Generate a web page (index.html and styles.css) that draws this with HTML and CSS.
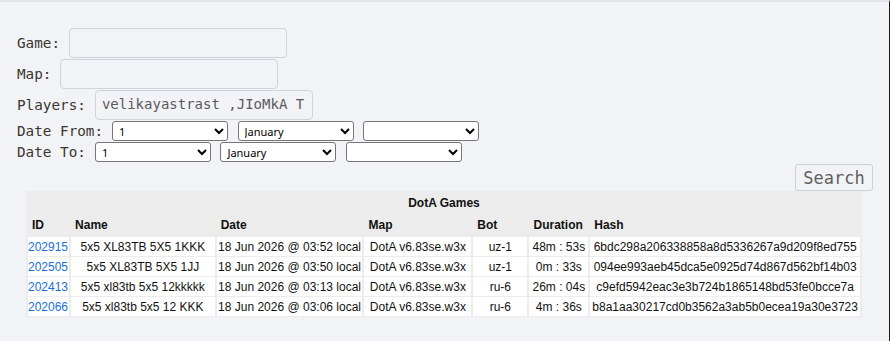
FILE: index.html
```html
<!DOCTYPE html>
<html lang="en">
<head>
    <meta charset="UTF-8">
    <meta name="viewport" content="width=device-width, initial-scale=1.0">
    <title>DotA Games</title>
    <link rel="stylesheet" href="styles.css">
</head>
<body>
    <div class="page">
        <form class="search-form">
            <div class="row">
                <label class="lbl">Game:</label>
                <input class="field" type="text">
            </div>
            <div class="row">
                <label class="lbl">Map:</label>
                <input class="field" type="text">
            </div>
            <div class="row">
                <label class="lbl">Players:</label>
                <input class="field" type="text" value="velikayastrast ,JIoMkA_T">
            </div>
            <div class="row date-row">
                <label class="lbl">Date From:</label>
                <select class="sel"><option>1</option></select>
                <select class="sel"><option>January</option></select>
                <select class="sel"><option></option></select>
            </div>
            <div class="row date-row">
                <label class="lbl">Date To:</label>
                <select class="sel"><option>1</option></select>
                <select class="sel"><option>January</option></select>
                <select class="sel"><option></option></select>
            </div>
            <div class="btn-row">
                <button class="search-btn" type="button">Search</button>
            </div>
        </form>

        <table class="games">
            <thead>
                <tr><th class="title" colspan="7">DotA Games</th></tr>
                <tr>
                    <th class="c-id">ID</th>
                    <th class="c-name">Name</th>
                    <th class="c-date">Date</th>
                    <th class="c-map">Map</th>
                    <th class="c-bot">Bot</th>
                    <th class="c-dur">Duration</th>
                    <th class="c-hash">Hash</th>
                </tr>
            </thead>
            <tbody>
                <tr>
                    <td class="id"><a href="#">202915</a></td>
                    <td>5x5 XL83TB 5X5 1KKK</td>
                    <td>18 Jun 2026 @ 03:52 local</td>
                    <td>DotA v6.83se.w3x</td>
                    <td>uz-1</td>
                    <td>48m : 53s</td>
                    <td>6bdc298a206338858a8d5336267a9d209f8ed755</td>
                </tr>
                <tr>
                    <td class="id"><a href="#">202505</a></td>
                    <td>5x5 XL83TB 5X5 1JJ</td>
                    <td>18 Jun 2026 @ 03:50 local</td>
                    <td>DotA v6.83se.w3x</td>
                    <td>uz-1</td>
                    <td>0m : 33s</td>
                    <td>094ee993aeb45dca5e0925d74d867d562bf14b03</td>
                </tr>
                <tr>
                    <td class="id"><a href="#">202413</a></td>
                    <td>5x5 xl83tb 5x5 12kkkkk</td>
                    <td>18 Jun 2026 @ 03:13 local</td>
                    <td>DotA v6.83se.w3x</td>
                    <td>ru-6</td>
                    <td>26m : 04s</td>
                    <td>c9efd5942eac3e3b724b1865148bd53fe0bcce7a</td>
                </tr>
                <tr>
                    <td class="id"><a href="#">202066</a></td>
                    <td>5x5 xl83tb 5x5 12 KKK</td>
                    <td>18 Jun 2026 @ 03:06 local</td>
                    <td>DotA v6.83se.w3x</td>
                    <td>ru-6</td>
                    <td>4m : 36s</td>
                    <td>b8a1aa30217cd0b3562a3ab5b0ecea19a30e3723</td>
                </tr>
            </tbody>
        </table>
    </div>
</body>
</html>
```

FILE: styles.css
```css
html, body {
    margin: 0;
    padding: 0;
    background: #fff;
}

.page {
    width: 890px;
    height: 341px;
    box-sizing: border-box;
    background-color: #f2f3f7;
    border-top: 2px solid #e3e4e9;
    border-right: 1px solid #1c1c1c;
    padding: 26px 16px 0 17px;
}

.search-form {
    font-family: 'DejaVu Sans Mono', monospace;
    font-size: 14.3px;
    color: #3a3630;
}

.row {
    display: flex;
    align-items: center;
    margin-bottom: 1px;
}

.lbl {
    margin-right: 9px;
    white-space: pre;
}

.field {
    width: 218px;
    height: 30px;
    box-sizing: border-box;
    border: 1px solid #d2d3d8;
    border-radius: 4px;
    background-color: #f2f3f7;
    padding: 0 4px 2px 6px;
    font-family: 'DejaVu Sans Mono', monospace;
    font-size: 14px;
    color: #5a5a5a;
    outline: none;
}

.date-row {
    height: 20px;
    margin-bottom: 1px;
}

.sel {
    width: 116px;
    height: 20px;
    box-sizing: border-box;
    margin-right: 9.5px;
    border: 1px solid #767676;
    border-radius: 3px;
    background-color: #fff;
    font-family: 'Noto Sans', sans-serif;
    font-size: 11px;
    color: #000;
    padding: 0 2px;
}

.btn-row {
    display: flex;
    justify-content: flex-end;
    padding-top: 1px;
}

.search-btn {
    width: 78px;
    height: 27px;
    border: 1px solid #cfd0d5;
    border-radius: 3px;
    background-color: #f2f3f7;
    font-family: 'DejaVu Sans Mono', monospace;
    font-size: 17px;
    color: #5f5f5f;
    padding: 0;
    cursor: pointer;
}

.games {
    margin-left: 9px;
    width: 836px;
    border-spacing: 2px 1px;
    background-color: #ececec;
    font-family: 'Liberation Sans', Arial, sans-serif;
    font-size: 12px;
    color: #111;
}

.games th {
    text-align: left;
    padding: 4px 4px;
    height: 23px;
    box-sizing: border-box;
    font-weight: bold;
}

.games th.title {
    text-align: center;
    height: 20px;
    padding: 2px 0 0;
}

.games td {
    background-color: #fff;
    text-align: center;
    padding: 0 1px;
    height: 19px;
    box-sizing: border-box;
    white-space: nowrap;
}

.games td.id {
    text-align: left;
    padding-left: 0;
}

.games a {
    color: #1a6fd8;
    text-decoration: none;
}

.c-id { width: 41px; }
.c-name { width: 146px; }
.c-date { width: 146px; }
.c-map { width: 108px; }
.c-bot { width: 58px; }
.c-dur { width: 59px; }
.c-hash { width: 270px; }
```
